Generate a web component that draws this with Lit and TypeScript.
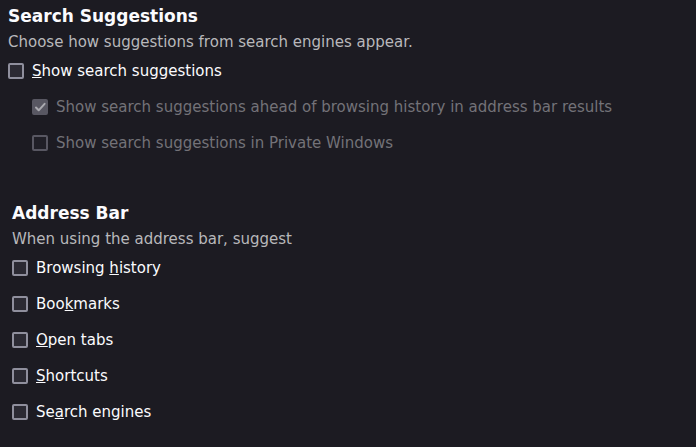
import { LitElement, html, css } from "lit";
import { customElement, property } from "lit/decorators.js";

interface Option {
  label: string;
  key?: string;
  checked?: boolean;
  disabled?: boolean;
}

@customElement("pref-checkbox")
class PrefCheckbox extends LitElement {
  @property({ attribute: false }) option!: Option;

  static styles = css`
    :host { display: block; }
    .row {
      display: flex;
      align-items: center;
      gap: 8px;
      line-height: 20px;
    }
    .row.disabled { color: #737278; }
    .box {
      display: grid;
      flex: none;
      width: 16px;
      height: 16px;
    }
    .box > * { grid-area: 1 / 1; }
    input {
      appearance: none;
      box-sizing: border-box;
      width: 16px;
      height: 16px;
      margin: 0;
      border: 2px solid #8f8f9d;
      border-radius: 2px;
      background: #2b2a33;
    }
    input:disabled {
      border-color: #585762;
      background: #201f27;
    }
    input:checked { background: #8f8f9d; }
    input:checked:disabled { background: #585762; }
    svg {
      width: 16px;
      height: 16px;
      fill: none;
      stroke: #aaaab0;
      stroke-width: 2;
      stroke-linecap: round;
      stroke-linejoin: round;
      pointer-events: none;
    }
    .key {
      text-decoration: underline;
    }
  `;

  render() {
    const { label, key, checked = false, disabled = false } = this.option;
    const at = key ? label.indexOf(key) : -1;
    const text = at < 0
      ? label
      : html`${label.slice(0, at)}<span class="key">${key}</span>${label.slice(at + 1)}`;
    return html`<label class="row ${disabled ? "disabled" : ""}"
      ><span class="box"
        ><input type="checkbox" .checked=${checked} ?disabled=${disabled} />${checked
          ? html`<svg viewBox="0 0 16 16" aria-hidden="true"><path d="M4 8.5 6.7 11.3 12.6 4.8" /></svg>`
          : null}</span
      ><span>${text}</span></label
    >`;
  }
}

@customElement("app-root")
class AppRoot extends LitElement {
  static styles = css`
    :host {
      display: block;
      box-sizing: border-box;
      min-height: 100vh;
      padding: 4px 8px;
      background: #1c1b22;
      color: #fbfbfe;
      font: 15px/20px "DejaVu Sans", sans-serif;
    }
    h2 {
      margin: 0;
      font-size: 17px;
      line-height: 24px;
      font-weight: 600;
    }
    p {
      margin: 4px 0 9px;
      color: #b8b8bb;
    }
    .list {
      display: flex;
      flex-direction: column;
      gap: 16px;
    }
    .nested { margin: 16px 0 0 24px; }
    .address { margin: 48px 0 0 4px; }
  `;

  private nested: Option[] = [
    { label: "Show search suggestions ahead of browsing history in address bar results", checked: true, disabled: true },
    { label: "Show search suggestions in Private Windows", disabled: true },
  ];

  private sources: Option[] = [
    { label: "Browsing history", key: "h" },
    { label: "Bookmarks", key: "k" },
    { label: "Open tabs", key: "O" },
    { label: "Shortcuts", key: "S" },
    { label: "Search engines", key: "a" },
  ];

  render() {
    return html`
      <section>
        <h2>Search Suggestions</h2>
        <p>Choose how suggestions from search engines appear.</p>
        <pref-checkbox .option=${{ label: "Show search suggestions", key: "S" }}></pref-checkbox>
        <div class="list nested">
          ${this.nested.map((o) => html`<pref-checkbox .option=${o}></pref-checkbox>`)}
        </div>
      </section>
      <section class="address">
        <h2>Address Bar</h2>
        <p>When using the address bar, suggest</p>
        <div class="list">
          ${this.sources.map((o) => html`<pref-checkbox .option=${o}></pref-checkbox>`)}
        </div>
      </section>
    `;
  }
}
